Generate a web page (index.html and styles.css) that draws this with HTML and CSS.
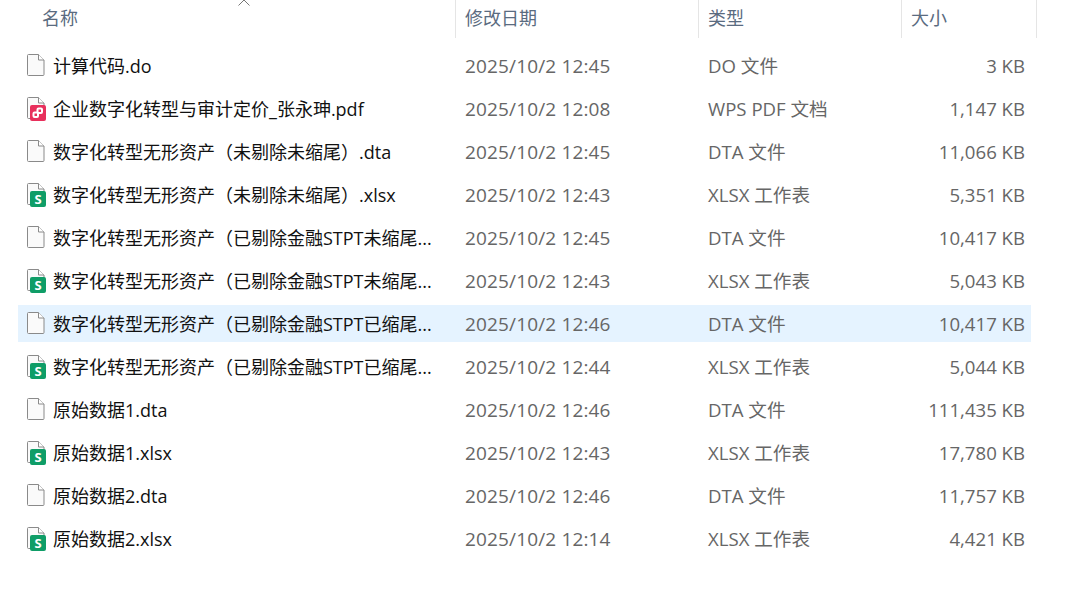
FILE: index.html
```html
<!DOCTYPE html>
<html lang="zh-CN">
<head>
  <meta charset="UTF-8" />
  <title>文件列表</title>
  <link rel="stylesheet" href="styles.css">
</head>
<body>
  <svg class="icon-defs" width="0" height="0">
    <symbol id="file-blank" viewBox="0 0 22 24">
      <path d="M1.500 .5H11.500L17 6V20.500A1 1 0 0 1 16 21.500H1.500A1 1 0 0 1 .5 20.500V1.500A1 1 0 0 1 1.500 .5Z" fill="#fafafa" stroke="#8a8a8a"/>
      <path d="M11.500 .5V6H17" fill="#fff" stroke="#8a8a8a"/>
    </symbol>
    <symbol id="file-xlsx" viewBox="0 0 22 24">
      <use href="#file-blank"/>
      <rect x="3" y="8" width="16" height="16" rx="2" fill="#0f9d67"/>
    </symbol>
    <symbol id="file-pdf" viewBox="0 0 22 24">
      <use href="#file-blank"/>
      <rect x="3" y="8" width="16" height="16" rx="2" fill="#e8305c"/>
      <rect x="6.500" y="15.500" width="4.500" height="4.500" rx="1" fill="none" stroke="#fff" stroke-width="2"/>
      <rect x="10.500" y="11.500" width="4.500" height="4.500" rx="1" fill="none" stroke="#fff" stroke-width="2"/>
    </symbol>
  </svg>

  <div class="file-list">
    <div class="list-head">
      <svg class="sort-caret" width="14" height="6" viewBox="0 0 14 6"><path d="M1.500 5.500L7 0L12.500 5.500" fill="none" stroke="#777"/></svg>
      <div class="head-cell">名称</div>
      <div class="head-cell">修改日期</div>
      <div class="head-cell">类型</div>
      <div class="head-cell">大小</div>
    </div>

    <div class="rows">
      <div class="row"><div class="name"><svg class="ficon"><use href="#file-blank"/></svg><span class="label">计算代码.do</span></div><div class="cell">2025/10/2 12:45</div><div class="cell kind">DO 文件</div><div class="cell size">3 KB</div></div>
      <div class="row"><div class="name"><svg class="ficon"><use href="#file-pdf"/></svg><span class="label">企业数字化转型与审计定价_张永珅.pdf</span></div><div class="cell">2025/10/2 12:08</div><div class="cell kind">WPS PDF 文档</div><div class="cell size">1,147 KB</div></div>
      <div class="row"><div class="name"><svg class="ficon"><use href="#file-blank"/></svg><span class="label">数字化转型无形资产（未剔除未缩尾）.dta</span></div><div class="cell">2025/10/2 12:45</div><div class="cell kind">DTA 文件</div><div class="cell size">11,066 KB</div></div>
      <div class="row"><div class="name"><svg class="ficon" viewBox="0 0 22 24"><use href="#file-xlsx"/><text x="11" y="20.500" class="badge-letter">S</text></svg><span class="label">数字化转型无形资产（未剔除未缩尾）.xlsx</span></div><div class="cell">2025/10/2 12:43</div><div class="cell kind">XLSX 工作表</div><div class="cell size">5,351 KB</div></div>
      <div class="row"><div class="name"><svg class="ficon"><use href="#file-blank"/></svg><span class="label">数字化转型无形资产（已剔除金融STPT未缩尾...</span></div><div class="cell">2025/10/2 12:45</div><div class="cell kind">DTA 文件</div><div class="cell size">10,417 KB</div></div>
      <div class="row"><div class="name"><svg class="ficon" viewBox="0 0 22 24"><use href="#file-xlsx"/><text x="11" y="20.500" class="badge-letter">S</text></svg><span class="label">数字化转型无形资产（已剔除金融STPT未缩尾...</span></div><div class="cell">2025/10/2 12:43</div><div class="cell kind">XLSX 工作表</div><div class="cell size">5,043 KB</div></div>
      <div class="row selected"><div class="name"><svg class="ficon"><use href="#file-blank"/></svg><span class="label">数字化转型无形资产（已剔除金融STPT已缩尾...</span></div><div class="cell">2025/10/2 12:46</div><div class="cell kind">DTA 文件</div><div class="cell size">10,417 KB</div></div>
      <div class="row"><div class="name"><svg class="ficon" viewBox="0 0 22 24"><use href="#file-xlsx"/><text x="11" y="20.500" class="badge-letter">S</text></svg><span class="label">数字化转型无形资产（已剔除金融STPT已缩尾...</span></div><div class="cell">2025/10/2 12:44</div><div class="cell kind">XLSX 工作表</div><div class="cell size">5,044 KB</div></div>
      <div class="row"><div class="name"><svg class="ficon"><use href="#file-blank"/></svg><span class="label">原始数据1.dta</span></div><div class="cell">2025/10/2 12:46</div><div class="cell kind">DTA 文件</div><div class="cell size">111,435 KB</div></div>
      <div class="row"><div class="name"><svg class="ficon" viewBox="0 0 22 24"><use href="#file-xlsx"/><text x="11" y="20.500" class="badge-letter">S</text></svg><span class="label">原始数据1.xlsx</span></div><div class="cell">2025/10/2 12:43</div><div class="cell kind">XLSX 工作表</div><div class="cell size">17,780 KB</div></div>
      <div class="row"><div class="name"><svg class="ficon"><use href="#file-blank"/></svg><span class="label">原始数据2.dta</span></div><div class="cell">2025/10/2 12:46</div><div class="cell kind">DTA 文件</div><div class="cell size">11,757 KB</div></div>
      <div class="row"><div class="name"><svg class="ficon" viewBox="0 0 22 24"><use href="#file-xlsx"/><text x="11" y="20.500" class="badge-letter">S</text></svg><span class="label">原始数据2.xlsx</span></div><div class="cell">2025/10/2 12:14</div><div class="cell kind">XLSX 工作表</div><div class="cell size">4,421 KB</div></div>
    </div>
  </div>
</body>
</html>
```

FILE: styles.css
```css
body {
  margin: 0;
  background-color: white;
  font-family: "Open Sans", "Noto Sans CJK SC", sans-serif;
  font-size: 18px;
  overflow: hidden;
}

.icon-defs {
  display: block;
}

.badge-letter {
  font-family: "Open Sans", sans-serif;
  font-size: 13px;
  font-weight: 700;
  fill: white;
  text-anchor: middle;
}

.file-list {
  width: 1019px;
  margin-left: 18px;
}

.list-head {
  position: relative;
  display: grid;
  grid-template-columns: 438px 243px 203px 135px;
  height: 38px;
}

.sort-caret {
  position: absolute;
  top: 0;
  left: 219px;
}

.head-cell {
  padding: 5px 0 0 9px;
  border-right: 1px solid #e5e5e5;
  color: #5a6b80;
  line-height: 26px;
}

.head-cell:first-of-type {
  padding-left: 24px;
}

.rows {
  display: flex;
  flex-direction: column;
  gap: 6px;
  padding-top: 9px;
}

.row {
  display: grid;
  grid-template-columns: 437px 243px 203px 130px;
  align-items: center;
  width: 1013px;
  height: 37px;
}

.row.selected {
  background-color: #e5f3ff;
}

.name {
  display: flex;
  align-items: center;
  color: #111;
  white-space: nowrap;
}

.label {
  padding-bottom: 2px;
}

.ficon {
  width: 22px;
  height: 24px;
  margin: 0 4px 0 9px;
  flex: none;
}

.cell {
  padding-left: 10px;
  color: #666;
  font-size: 19px;
  letter-spacing: 0.15px;
}

.kind {
  padding-bottom: 2px;
  font-size: 18.600px;
  letter-spacing: 0;
}

.size {
  padding-right: 6px;
  text-align: right;
  font-size: 18.600px;
  letter-spacing: 0;
}
```
